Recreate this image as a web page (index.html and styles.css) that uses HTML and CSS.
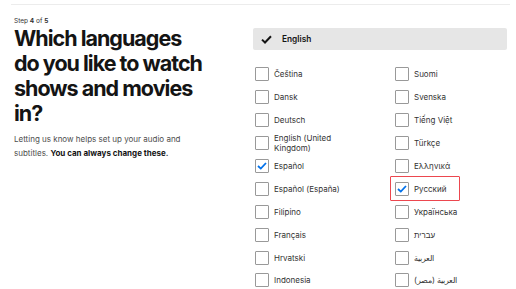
FILE: index.html
```html
<!DOCTYPE html>
<html lang="en">

<head>
  <meta charset="UTF-8" />
  <meta name="viewport" content="width=device-width, initial-scale=1" />
  <title>Choose languages</title>
  <link rel="stylesheet" href="styles.css">
</head>

<body>

  <div class="topline"></div>

  <div class="page">
    <!-- Left: step + heading -->
    <div class="intro">
      <div class="step">Step <b>4</b> of <b>5</b></div>
      <h1>Which languages do&nbsp;you like to watch shows and movies in?</h1>
      <p>Letting us know helps set up your audio and subtitles. <b>You can always change these.</b></p>
    </div>

    <!-- Right: languages -->
    <div class="langs">
      <div class="primary">
        <svg width="11" height="9" viewBox="0 0 11 9"><path d="M1 4.6 L4 7.5 L10 1.3" fill="none" stroke="#141414" stroke-width="2"/></svg>
        <span>English</span>
      </div>

      <div class="grid">
        <label class="opt"><span class="box"></span>Čeština</label>
        <label class="opt"><span class="box"></span>Suomi</label>
        <label class="opt"><span class="box"></span>Dansk</label>
        <label class="opt"><span class="box"></span>Svenska</label>
        <label class="opt"><span class="box"></span>Deutsch</label>
        <label class="opt"><span class="box"></span>Tiếng Việt</label>
        <label class="opt"><span class="box"></span>English (United Kingdom)</label>
        <label class="opt"><span class="box"></span>Türkçe</label>
        <label class="opt"><span class="box checked"><svg width="10" height="8" viewBox="0 0 10 8"><path d="M1 4 L3.8 6.6 L9 1" fill="none" stroke="#0071eb" stroke-width="1.8"/></svg></span>Español</label>
        <label class="opt"><span class="box"></span>Ελληνικά</label>
        <label class="opt"><span class="box"></span>Español (España)</label>
        <label class="opt marked"><span class="box checked"><svg width="10" height="8" viewBox="0 0 10 8"><path d="M1 4 L3.8 6.6 L9 1" fill="none" stroke="#0071eb" stroke-width="1.8"/></svg></span>Русский</label>
        <label class="opt"><span class="box"></span>Filipino</label>
        <label class="opt"><span class="box"></span>Українська</label>
        <label class="opt"><span class="box"></span>Français</label>
        <label class="opt"><span class="box"></span>עברית</label>
        <label class="opt"><span class="box"></span>Hrvatski</label>
        <label class="opt"><span class="box"></span>العربية</label>
        <label class="opt"><span class="box"></span>Indonesia</label>
        <label class="opt"><span class="box"></span>العربية (مصر)</label>
      </div>
    </div>
  </div>

</body>

</html>
```

FILE: styles.css
```css
* {
  box-sizing: border-box;
}

body {
  margin: 0;
  background: #fff;
  color: #141414;
  font-family: Inter, "Noto Sans", sans-serif;
  height: 289px;
  overflow: hidden;
}

.topline {
  margin: 4px 6px 0 11px;
  height: 1px;
  background: #ececec;
}

.page {
  display: flex;
  padding: 0 9px 0 14px;
}

/* Intro */
.intro {
  width: 239px;
  padding-top: 12px;
}

.step {
  font-size: 6.5px;
  color: #333;
}

.step b {
  font-weight: 700;
}

h1 {
  margin: 1px 0 6px;
  width: 200px;
  font-size: 21.5px;
  line-height: 25px;
  font-weight: 700;
  letter-spacing: -1px;
}

.intro p {
  margin: 0;
  width: 172px;
  font-size: 8px;
  line-height: 14px;
  color: #4d4d4d;
}

.intro p b {
  color: #141414;
  font-weight: 700;
}

/* Languages */
.langs {
  flex: 1;
  padding-top: 23px;
}

.primary {
  display: flex;
  align-items: center;
  gap: 10px;
  height: 22px;
  padding-left: 8px;
  background: #e6e6e6;
  border-radius: 2px;
  font-size: 8.3px;
  font-weight: 600;
}

.grid {
  display: grid;
  grid-template-columns: 140px 1fr;
  grid-auto-rows: 22.9px;
  margin-top: 13px;
  padding-left: 2px;
}

.opt {
  display: flex;
  align-items: center;
  gap: 5px;
  font-size: 8px;
  line-height: 10px;
  color: #333;
  width: 110px;
}

.box {
  flex: none;
  width: 14px;
  height: 14px;
  border: 1px solid #999;
  border-radius: 1px;
  background: #fff;
  display: flex;
  align-items: center;
  justify-content: center;
}

.marked {
  position: relative;
}

.marked::after {
  content: "";
  position: absolute;
  left: -5px;
  top: -1px;
  width: 68px;
  height: 23px;
  border: 1px solid #e50914;
  border-radius: 1px;
  opacity: 0.75;
}
```
